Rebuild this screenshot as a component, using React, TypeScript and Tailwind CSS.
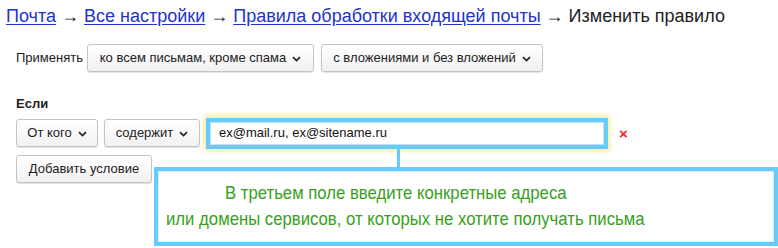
import React from "react";

function Chevron() {
    return (
        <svg className="ml-1.5 mt-0.5" width="9" height="6" viewBox="0 0 9 6">
            <path d="M1 1.2 L4.5 4.5 L8 1.2" fill="none" stroke="#222" strokeWidth="1.7" />
        </svg>
    );
}

const btn = "flex items-center justify-center h-[28px] border border-[#c4c4c4] rounded-[3px] bg-gradient-to-b from-white to-[#f1f1f1] shadow-[0_1px_1px_rgba(0,0,0,0.12)] text-[13px] text-[#222] whitespace-nowrap shrink-0 ";

function Select({ label, className }: { label: string; className?: string }) {
    return (
        <div className={btn + (className ?? "")}>
            <span>{label}</span>
            <Chevron />
        </div>
    );
}

export default function App() {
    return (
        <div className="w-[778px] h-[248px] bg-white overflow-hidden font-['Liberation_Sans',Arial,sans-serif] text-[#222]">
            <div className="pl-[6px] pt-[5px] text-[18px] leading-[22px] whitespace-nowrap">
                <a className="text-[#2233c8] underline underline-offset-2">Почта</a>
                <span> → </span>
                <a className="text-[#2233c8] underline underline-offset-2">Все настройки</a>
                <span> → </span>
                <a className="text-[#2233c8] underline underline-offset-2">Правила обработки входящей почты</a>
                <span> → Изменить правило</span>
            </div>

            <div className="flex items-center pl-[16px] mt-[17px]">
                <span className="text-[13px] text-[#222] w-[71px]">Применять</span>
                <Select label="ко всем письмам, кроме спама" className="w-[227px]" />
                <Select label="с вложениями и без вложений" className="w-[222px] ml-[7px]" />
            </div>

            <div className="pl-[16px] mt-[22px] text-[13px] font-bold">Если</div>

            <div className="flex items-center pl-[16px] mt-[4px]">
                <Select label="От кого" className="w-[82px]" />
                <Select label="содержит" className="w-[96px] ml-[6px]" />
                <div className="relative ml-[6px] w-[402px] h-[31px] border-[4px] border-[#66ccff] bg-white shadow-[0_0_4px_2px_rgba(255,222,110,0.7)]">
                    <div className="h-full border border-[#bfe6f8] flex items-center pl-[8px] text-[13px] text-[#111]">
                        ex@mail.ru, ex@sitename.ru
                    </div>
                    <div className="absolute left-[187px] top-[27px] w-[3px] h-[20px] bg-[#66ccff]" />
                </div>
                <span className="ml-[11px] text-[15px] leading-none text-[#ff2222] font-bold">×</span>
            </div>

            <div className="flex items-start pl-[16px] mt-[6px]">
                <div className={btn + "w-[136px]"}>Добавить условие</div>
                <div className="ml-[2px] mt-[12px] w-[624px] h-[79px] border-[4px] border-[#66ccff] bg-white shrink-0">
                    <div className="h-full border border-[#d6eefa] flex flex-col justify-center text-[19px] leading-[26px] text-[#38a01c] whitespace-nowrap">
                        <div className="ml-[66px] origin-left scale-x-[0.88]">В третьем поле введите конкретные адреса</div>
                        <div className="ml-[7px] origin-left scale-x-[0.88]">или домены сервисов, от которых не хотите получать письма</div>
                    </div>
                </div>
            </div>
        </div>
    );
}
